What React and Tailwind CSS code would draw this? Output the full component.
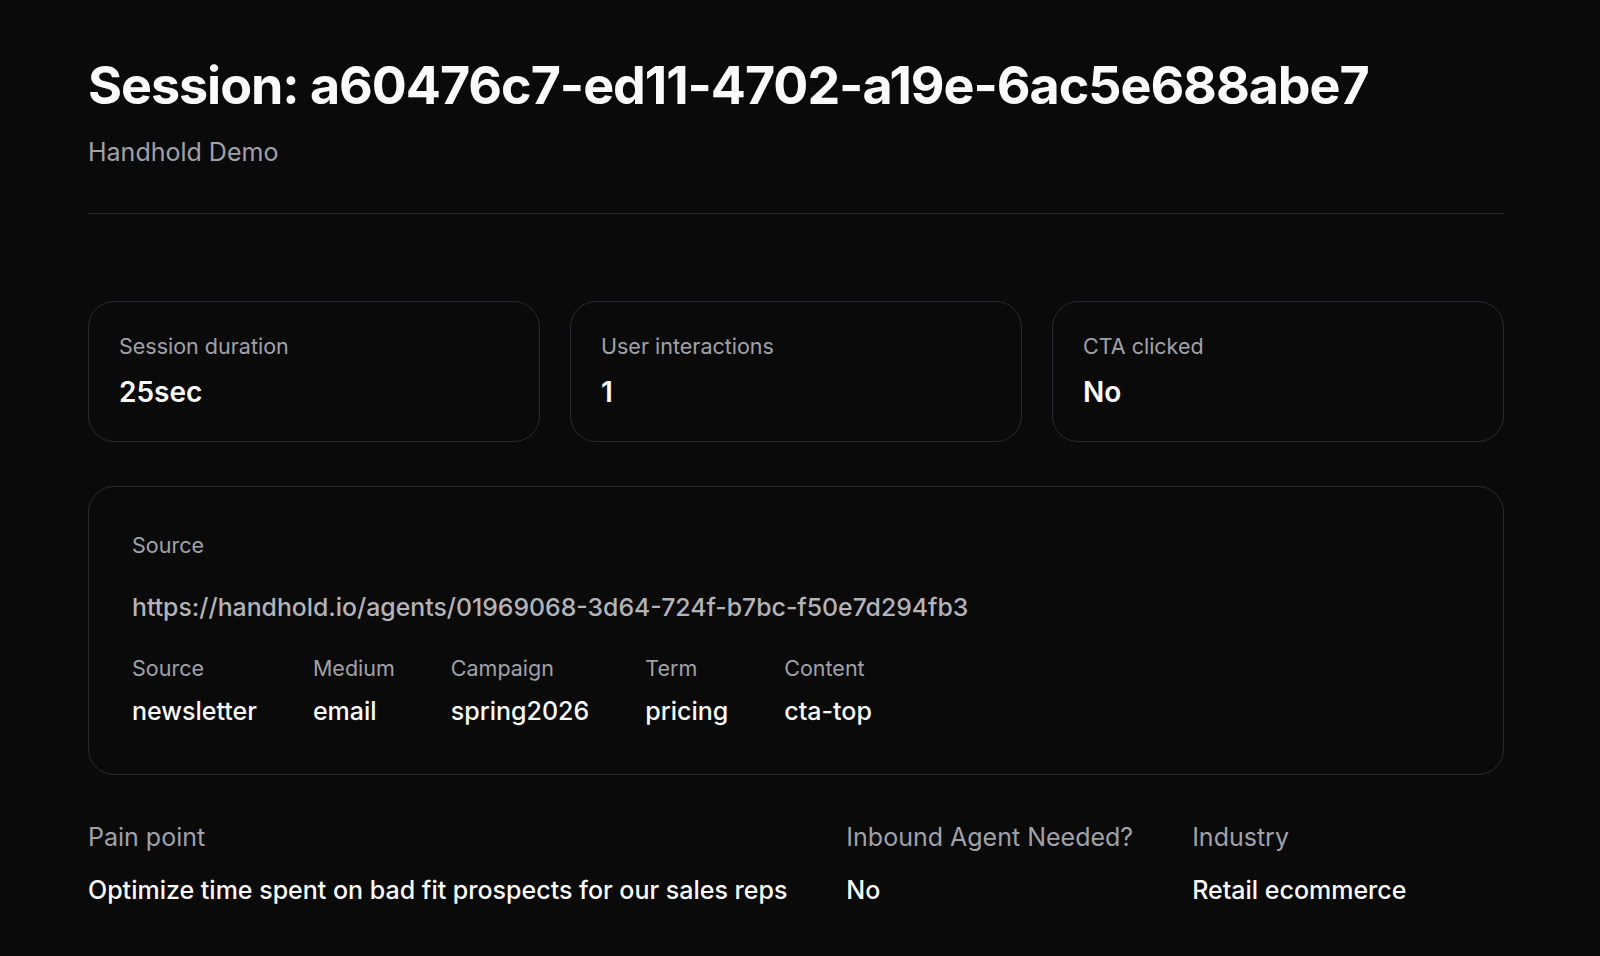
// App.jsx

const stats = [
  { label: "Session duration", value: "25sec" },
  { label: "User interactions", value: "1" },
  { label: "CTA clicked", value: "No" },
];

const utm = [
  { label: "Source", value: "newsletter" },
  { label: "Medium", value: "email" },
  { label: "Campaign", value: "spring2026" },
  { label: "Term", value: "pricing" },
  { label: "Content", value: "cta-top" },
];

const details = [
  { label: "Pain point", value: "Optimize time spent on bad fit prospects for our sales reps" },
  { label: "Inbound Agent Needed?", value: "No" },
  { label: "Industry", value: "Retail ecommerce" },
];

export default function App() {
  return (
    <div
      className="min-h-screen bg-[#0a0a0b] text-[#fafafa]"
      style={{ fontFamily: "Inter, 'Noto Sans', sans-serif" }}
    >
      <div className="pl-[88px] pr-[96px] pt-[55px] pb-10">
        <header className="border-b border-[#27272a] pb-[45px]">
          <h1 className="text-[52px] leading-[62px] font-bold tracking-[-0.02em]">
            Session: a60476c7-ed11-4702-a19e-6ac5e688abe7
          </h1>
          <p className="mt-[19px] text-[25px] leading-8 text-[#a1a1aa]">Handhold Demo</p>
        </header>

        <div className="mt-[87px] grid grid-cols-3 gap-[30px]">
          {stats.map((s) => (
            <div
              key={s.label}
              className="rounded-[26px] border border-[#2a2a2e] pl-[30px] pr-6 pt-[30px] pb-[32px]"
            >
              <div className="text-[21.5px] leading-7 text-[#a1a1aa]">{s.label}</div>
              <div className="mt-[15px] text-[28px] leading-[34px] font-semibold">{s.value}</div>
            </div>
          ))}
        </div>

        <div className="mt-[44px] rounded-[26px] border border-[#2a2a2e] px-[43px] pt-[44px] pb-[47px]">
          <div className="text-[21.5px] leading-7 text-[#a1a1aa]">Source</div>
          <div className="mt-[32px] text-[24.8px] leading-8 font-medium text-[#b4b4b8]">
            https://handhold.io/agents/01969068-3d64-724f-b7bc-f50e7d294fb3
          </div>
          <div className="mt-[31px] flex gap-14">
            {utm.map((u) => (
              <div key={u.label}>
                <div className="text-[21.5px] leading-7 text-[#a1a1aa]">{u.label}</div>
                <div className="mt-[13px] text-[25px] leading-8 font-medium">{u.value}</div>
              </div>
            ))}
          </div>
        </div>

        <div className="mt-[46px] flex gap-[59px]">
          {details.map((d) => (
            <div key={d.label}>
              <div className="text-[25px] leading-8 text-[#a1a1aa]">{d.label}</div>
              <div className="mt-[21px] text-[25px] leading-8 font-medium">{d.value}</div>
            </div>
          ))}
        </div>
      </div>
    </div>
  );
}
